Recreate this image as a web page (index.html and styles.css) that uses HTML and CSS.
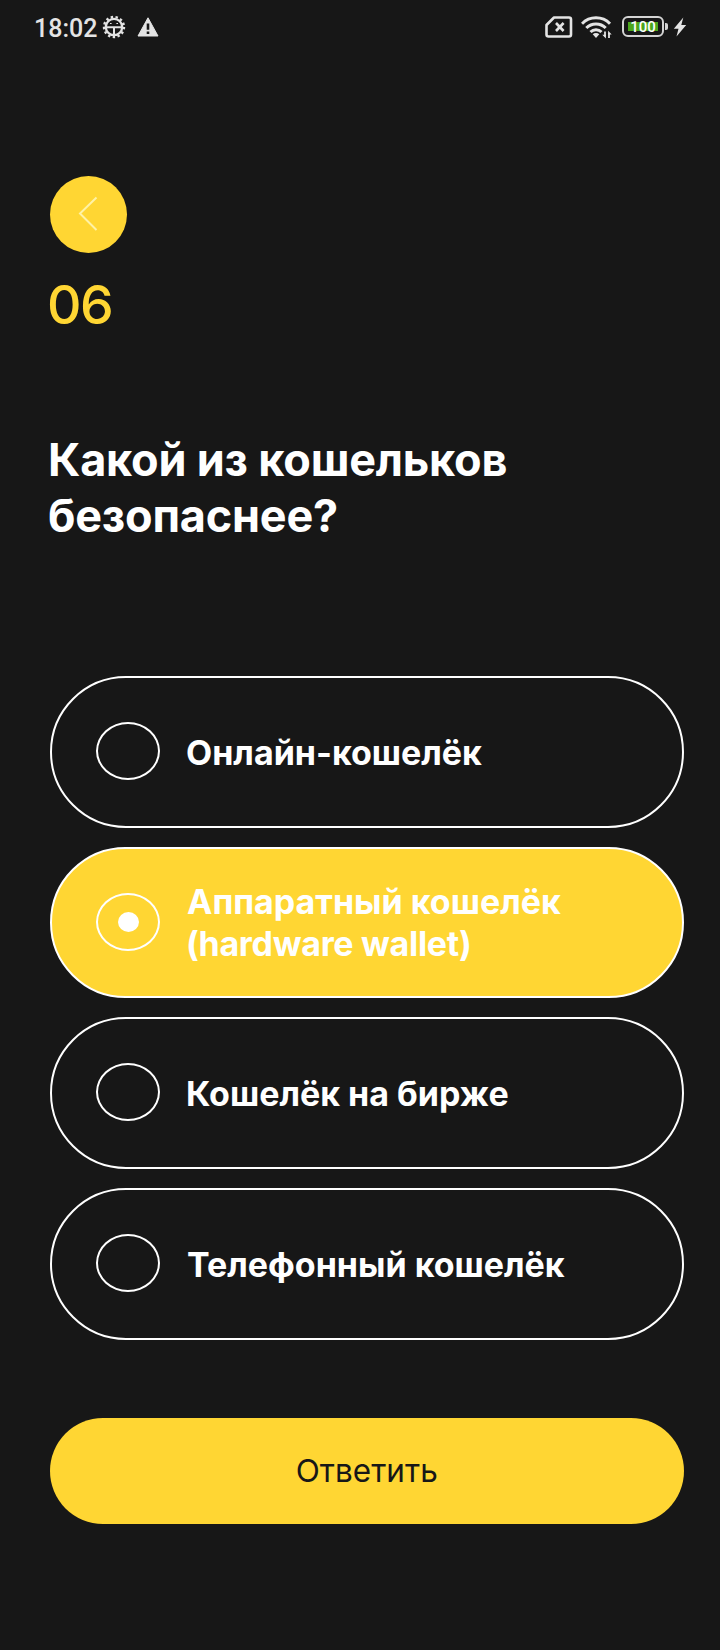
FILE: index.html
```html
<!DOCTYPE html>
<html lang="ru">
<head>
<meta charset="utf-8">
<title>Вопрос 06</title>
<link rel="stylesheet" href="styles.css">
</head>
<body>
<div class="screen">
  <header class="status">
    <div class="status-left">
      <span class="clock">18:02</span>
      <svg class="gear" viewBox="0 0 24 24" width="24" height="24">
        <circle cx="12" cy="12" r="10" fill="none" stroke="#e4e4e4" stroke-width="2.4" stroke-dasharray="2.4 2.433"/>
        <circle cx="12" cy="12" r="8.2" fill="none" stroke="#e4e4e4" stroke-width="2.3"/>
        <path d="M3 12.2h18M12 12v9" stroke="#e4e4e4" stroke-width="2"/>
        <path d="M8 8.5h1.6M14.4 8.5H16" stroke="#e4e4e4" stroke-width="1.2"/>
      </svg>
      <svg class="warn" viewBox="0 0 22 20" width="22" height="20">
        <path d="M11 .8 21 19H1z" fill="#e4e4e4" stroke="#e4e4e4" stroke-linejoin="round"/>
        <path d="M11 6.5v6.3M11 14.6v2.4" stroke="#171717" stroke-width="2.6"/>
      </svg>
    </div>
    <div class="status-right">
      <svg viewBox="0 0 28 22" width="28" height="22">
        <path d="M9 1.5h15a2 2 0 0 1 2 2v15a2 2 0 0 1-2 2H3.5a2 2 0 0 1-2-2V9z" fill="none" stroke="#e4e4e4" stroke-width="2.6" stroke-linejoin="round"/>
        <path d="m11 7 7.6 8M18.6 7 11 15" stroke="#e4e4e4" stroke-width="2.6"/>
      </svg>
      <svg class="wifi" viewBox="0 0 31 24" width="31" height="24">
        <g fill="none" stroke="#e4e4e4" stroke-width="3">
          <path d="M1 8.8a19.5 19.5 0 0 1 28 0"/>
          <path d="M5.3 13a13.7 13.7 0 0 1 19.4 0"/>
          <path d="M9.5 17a7.8 7.8 0 0 1 11 0"/>
        </g>
        <path d="M11.7 19.3a4.7 4.7 0 0 1 6.6 0L15 23z" fill="#e4e4e4"/>
        <path d="M24 16.5v5M28 18v5" stroke="#e4e4e4" stroke-width="1.8"/>
        <path d="M21.3 19.8h3.6v3.8zM30.7 19.5h-3.6v-3.8z" fill="#e4e4e4"/>
      </svg>
      <div class="battery"><div class="battery-level">100</div></div>
      <svg class="bolt" viewBox="0 0 14 20" width="14" height="20">
        <path d="M10.3.5.8 11.8h4.7L3.5 19.5 13.2 8H8.3z" fill="#e4e4e4"/>
      </svg>
    </div>
  </header>

  <main class="quiz">
    <button class="back" aria-label="Назад">
      <svg viewBox="0 0 77 77" width="77" height="77"><path d="M46.5 21.500 30 37.500 46.500 54" fill="none" stroke="#fff2a6" stroke-width="2"/></svg>
    </button>
    <div class="number">06</div>
    <h1 class="question">Какой из кошельков<br>безопаснее?</h1>
    <div class="options">
      <label class="option"><span class="radio"></span><span class="label">Онлайн-кошелёк</span></label>
      <label class="option selected"><span class="radio"><span class="dot"></span></span><span class="label"><span class="lead">Аппаратный кошелёк</span><br><span class="latin">(hardware wallet)</span></span></label>
      <label class="option"><span class="radio"></span><span class="label">Кошелёк на бирже</span></label>
      <label class="option"><span class="radio"></span><span class="label lead">Телефонный кошелёк</span></label>
    </div>
    <button class="submit">Ответить</button>
  </main>
</div>
</body>
</html>
```
FILE: styles.css
```css
* { box-sizing: border-box; }
body { margin: 0; background: #171717; }
.screen {
  width: 720px;
  height: 1650px;
  overflow: hidden;
  background: #171717;
  color: #fff;
  font-family: Inter, "Noto Sans", sans-serif;
}
.status {
  display: flex;
  justify-content: space-between;
  height: 56px;
  padding: 15px 33px 0 34px;
}
.status-left, .status-right { display: flex; }
.clock {
  width: 68px;
  font: 500 25px/27px Roboto, sans-serif;
  color: #e4e4e4;
}
.warn { margin: 2px 0 0 11px; }
.status-right { padding-top: 1px; }
.wifi { margin: -1px 0 0 8px; }
.battery {
  position: relative;
  width: 42px;
  height: 21px;
  margin-left: 10px;
  padding: 4px;
  border: 2px solid #d4d4d4;
  border-radius: 6px;
}
.battery::after {
  content: "";
  position: absolute;
  left: 41px;
  top: 5px;
  width: 3px;
  height: 7px;
  border-radius: 0 2px 2px 0;
  background: #d4d4d4;
}
.battery-level {
  height: 9px;
  background: #4ba61c;
  color: #fff;
  font: 500 15px/10px Roboto, sans-serif;
  text-align: center;
}
.bolt { margin: 1px 0 0 9px; }
.quiz {
  display: flex;
  flex-direction: column;
  align-items: flex-start;
  padding: 120px 36.5px 0 50px;
}
.back {
  width: 77px;
  height: 77px;
  padding: 0;
  border: 0;
  border-radius: 50%;
  background: #ffd633;
}
.back svg { display: block; }
.number {
  margin: 20px 0 0 -3px;
  font-size: 53.5px;
  font-weight: 500;
  line-height: 64px;
  letter-spacing: -1.5px;
  color: #ffd633;
}
.question {
  margin: 95px 0 0 -2px;
  font-size: 45px;
  font-weight: 700;
  line-height: 55.5px;
  letter-spacing: -0.2px;
  white-space: nowrap;
}
.options {
  display: flex;
  flex-direction: column;
  gap: 19px;
  width: 100%;
  margin-top: 133px;
}
.option {
  display: flex;
  align-items: center;
  gap: 26px;
  height: 151.7px;
  padding-left: 44px;
  border: 2px solid #fff;
  border-radius: 76px;
}
.radio {
  display: flex;
  align-items: center;
  justify-content: center;
  width: 64px;
  height: 58px;
  margin-bottom: 1.5px;
  border: 2px solid #fff;
  border-radius: 50%;
}
.dot {
  width: 21px;
  height: 20px;
  border-radius: 50%;
  background: #fff;
}
.label {
  padding-top: 1.6px;
  font-size: 34px;
  font-weight: 700;
  line-height: 42px;
  white-space: nowrap;
}
.lead { padding-left: 1px; }
.latin { letter-spacing: -0.3px; }
.selected { background: #ffd633; }
.submit {
  width: 100%;
  height: 106px;
  margin-top: 78px;
  padding: 0;
  border: 0;
  border-radius: 53px;
  background: #ffd633;
  color: #171717;
  font: 400 31.5px/38px Inter, "Noto Sans", sans-serif;
}
```
